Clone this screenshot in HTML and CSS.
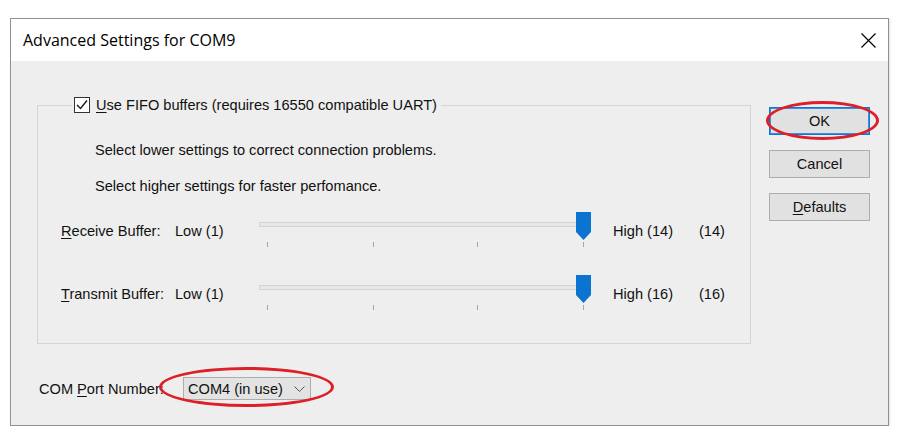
FILE: index.html
```html
<!DOCTYPE html>
<html lang="en">
<head>
<meta charset="utf-8">
<title>Advanced Settings for COM9</title>
<link rel="stylesheet" href="styles.css">
</head>
<body>
<div class="window">
  <header class="titlebar">
    <span class="title">Advanced Settings for COM9</span>
    <svg class="close" width="15" height="15" viewBox="0 0 15 15" aria-label="Close">
      <path d="M0.5 0.5L14.5 14.5M14.5 0.5L0.5 14.5" stroke="#000" stroke-width="1.2" fill="none"/>
    </svg>
  </header>

  <div class="panel">
    <div class="main">
      <fieldset class="group">
        <legend class="group-title">
          <span class="checkbox">
            <svg width="14" height="14" viewBox="0 0 14 14">
              <path d="M2 7L5.5 10.5L12 2.5" stroke="#222" stroke-width="1.5" fill="none"/>
            </svg>
          </span>
          <span><u>U</u>se FIFO buffers (requires 16550 compatible UART)</span>
        </legend>

        <p class="note">Select lower settings to correct connection problems.</p>
        <p class="note note-second">Select higher settings for faster perfomance.</p>

        <div class="buffer-row">
          <span><u>R</u>eceive Buffer:</span>
          <span>Low (1)</span>
          <svg class="slider" width="332" height="37" viewBox="0 0 332 37">
            <rect x="0.5" y="10.5" width="329" height="4" fill="#e7e7e7" stroke="#d4d4d4"/>
            <path d="M8.5 30v5M114.5 30v5M218.5 30v5M324.5 30v5" stroke="#a6a6a6"/>
            <path d="M317 0H332V20L324.5 28L317 20Z" fill="#0b74d1"/>
          </svg>
          <span>High (14)</span>
          <span>(14)</span>
        </div>

        <div class="buffer-row buffer-row-second">
          <span><u>T</u>ransmit Buffer:</span>
          <span>Low (1)</span>
          <svg class="slider" width="332" height="37" viewBox="0 0 332 37">
            <rect x="0.5" y="10.5" width="329" height="4" fill="#e7e7e7" stroke="#d4d4d4"/>
            <path d="M8.5 30v5M114.5 30v5M218.5 30v5M324.5 30v5" stroke="#a6a6a6"/>
            <path d="M317 0H332V20L324.5 28L317 20Z" fill="#0b74d1"/>
          </svg>
          <span>High (16)</span>
          <span>(16)</span>
        </div>
      </fieldset>

      <div class="port-row">
        <span class="port-label">COM <u>P</u>ort Number:</span>
        <div class="combo">
          <span>COM4 (in use)</span>
          <svg width="11" height="6" viewBox="0 0 11 6">
            <path d="M0.5 0.5L5.5 5.5L10.5 0.5" stroke="#555" fill="none"/>
          </svg>
          <span class="mark mark-combo"></span>
        </div>
      </div>
    </div>

    <div class="buttons">
      <button class="btn btn-default">OK<span class="mark mark-ok"></span></button>
      <button class="btn">Cancel</button>
      <button class="btn"><u>D</u>efaults</button>
    </div>
  </div>
</div>
</body>
</html>
```

FILE: styles.css
```css
* {
  box-sizing: border-box;
}

html,
body {
  margin: 0;
}

body {
  background: #fff;
  font-family: "Liberation Sans", Arial, sans-serif;
  font-size: 14.6px;
  color: #111;
}

u {
  text-underline-offset: 2px;
}

/* dialog frame */
.window {
  margin: 18px 0 0 10px;
  width: 879px;
  height: 408px;
  border: 1px solid #8a929c;
  background: #eeeeee;
  display: flex;
  flex-direction: column;
  box-shadow: 1px 1px 2px rgba(0, 0, 0, 0.12);
}

.titlebar {
  height: 42px;
  flex: none;
  background: #fff;
  display: flex;
  align-items: center;
  justify-content: space-between;
  padding: 0 12px;
}

.title {
  font-family: "Open Sans", "Noto Sans", sans-serif;
  font-size: 16px;
  color: #000;
}

.close {
  display: block;
}

/* content area */
.panel {
  display: flex;
  gap: 18px;
  padding: 36px 0 0 26px;
}

.main {
  width: 714px;
  display: flex;
  flex-direction: column;
}

.group {
  margin: 0;
  min-width: 0;
  border: 1px solid #d5d5d5;
  padding: 28px 0 31px 23px;
}

.group-title {
  margin-left: 11px;
  padding: 0 4px 0 2px;
  display: flex;
  align-items: center;
  gap: 6px;
  line-height: 16px;
}

.checkbox {
  width: 16px;
  height: 16px;
  border: 1px solid #333;
  background: #fff;
  display: flex;
}

.note {
  margin: 0 0 0 34px;
  line-height: 18px;
}

.note-second {
  margin-top: 18px;
}

.buffer-row {
  margin-top: 17px;
  height: 37px;
  display: grid;
  grid-template-columns: 114px 84px 354px 86px auto;
  align-items: center;
}

.buffer-row-second {
  margin-top: 26px;
}

.slider {
  display: block;
}

/* COM port selector */
.port-row {
  margin-top: 33px;
  padding-left: 2px;
  display: flex;
  align-items: center;
}

.port-label {
  width: 144px;
}

.combo {
  position: relative;
  width: 128px;
  height: 23px;
  border: 1px solid #adadad;
  background: #e3e3e3;
  display: flex;
  align-items: center;
  justify-content: space-between;
  padding: 0 5px 0 4px;
}

.combo svg {
  display: block;
}

/* command buttons */
.buttons {
  padding-top: 10px;
  display: flex;
  flex-direction: column;
  gap: 15px;
}

.btn {
  position: relative;
  width: 101px;
  height: 28px;
  padding: 0;
  border: 1px solid #adadad;
  background: #e1e1e1;
  font: inherit;
  color: inherit;
}

.btn-default {
  border-color: #0a78d6;
  box-shadow: inset 0 0 0 1px #3c8fdb;
}

/* red highlight rings drawn over controls */
.mark {
  position: absolute;
  border: 3px solid #dd1f27;
  border-radius: 50%;
  pointer-events: none;
}

.mark-ok {
  left: -4px;
  top: -7px;
  width: 113px;
  height: 39px;
}

.mark-combo {
  left: -25px;
  top: -11px;
  width: 175px;
  height: 40px;
}
```
